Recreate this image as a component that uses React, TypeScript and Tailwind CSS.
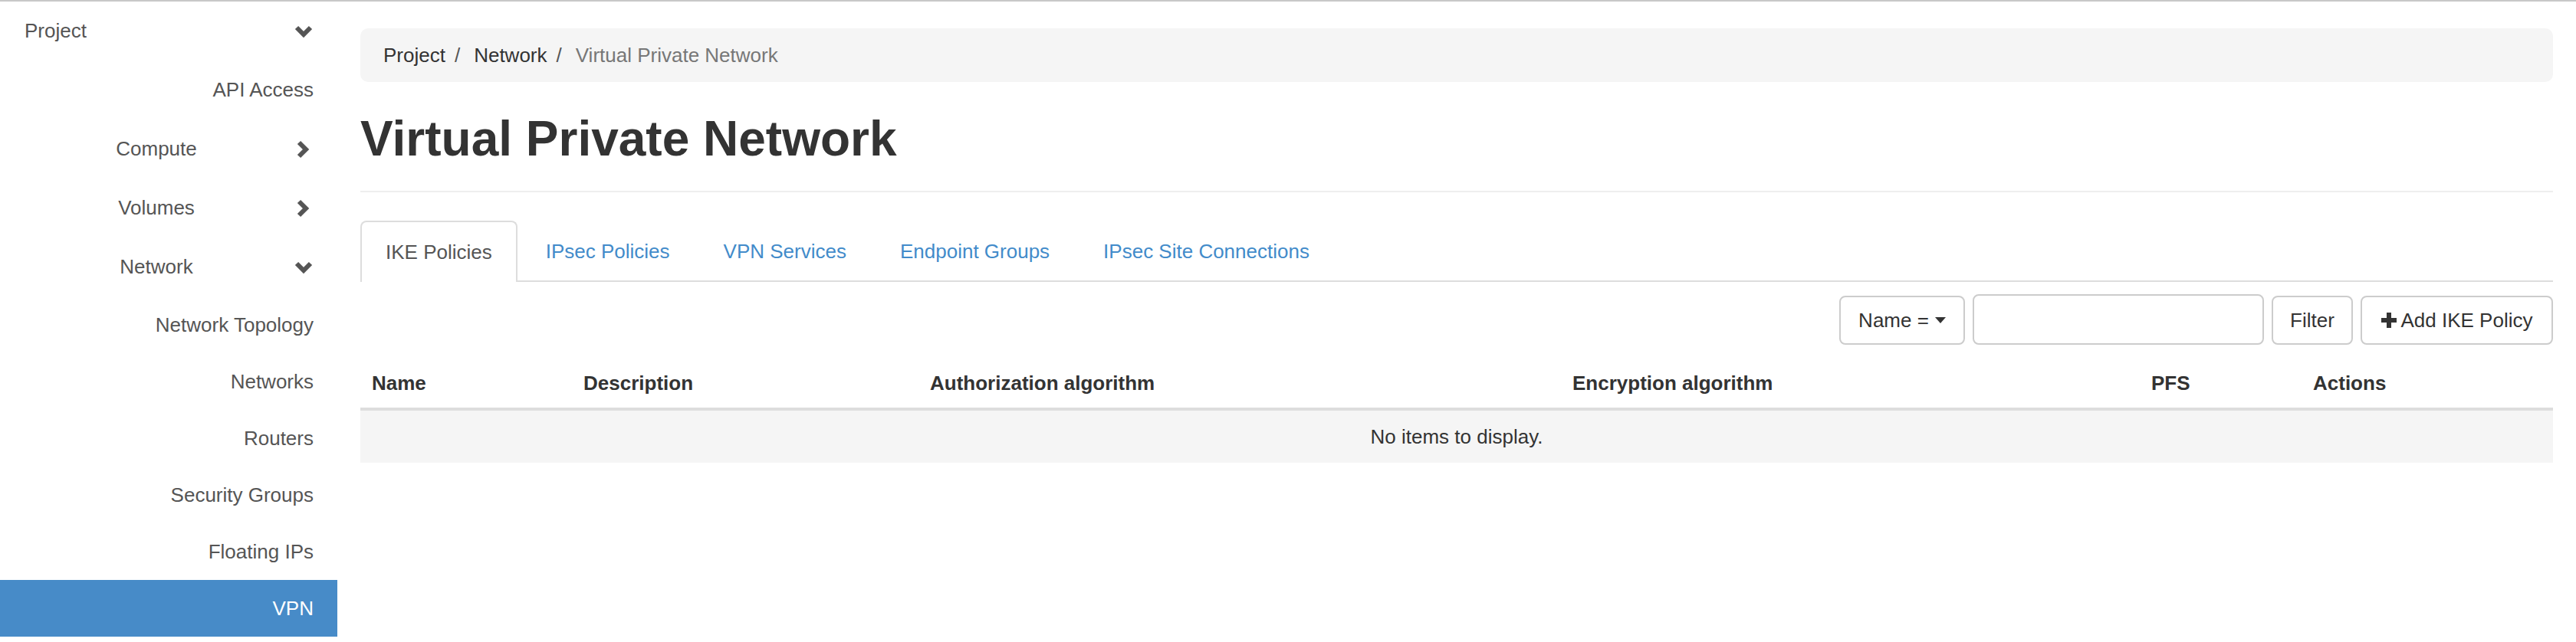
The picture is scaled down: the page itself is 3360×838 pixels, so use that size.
import React from "react";

const font = { fontFamily: '"Liberation Sans", Arial, sans-serif' };

const ChevronDown = () => (
  <svg width="24" height="18" viewBox="0 0 24 18" className="shrink-0">
    <polyline points="3,4 12,13 21,4" fill="none" stroke="#555" strokeWidth="6" strokeLinejoin="miter" />
  </svg>
);

const ChevronRight = () => (
  <svg width="24" height="24" viewBox="0 0 24 24" className="shrink-0">
    <polyline points="6,3 15,12 6,21" fill="none" stroke="#555" strokeWidth="6" strokeLinejoin="miter" />
  </svg>
);

const groups = [
  { label: "Compute", open: false },
  { label: "Volumes", open: false },
  { label: "Network", open: true },
];

const networkLinks = ["Network Topology", "Networks", "Routers", "Security Groups", "Floating IPs"];

const tabs = ["IKE Policies", "IPsec Policies", "VPN Services", "Endpoint Groups", "IPsec Site Connections"];

const columns = [
  { label: "Name", w: "w-[276px]" },
  { label: "Description", w: "w-[452px]" },
  { label: "Authorization algorithm", w: "w-[838px]" },
  { label: "Encryption algorithm", w: "w-[755px]" },
  { label: "PFS", w: "w-[211px]" },
  { label: "Actions", w: "flex-1" },
];

function Sidebar() {
  return (
    <aside className="w-[440px] shrink-0 flex flex-col text-[26px] text-[#555]">
      <div className="h-[77px] flex items-center pl-[32px] pr-[32px]">
        <span className="flex-1">Project</span>
        <ChevronDown />
      </div>
      <div className="h-[77px] flex items-center justify-end pr-[31px]">API Access</div>
      {groups.map((g) => (
        <div key={g.label} className="h-[77px] flex items-center pl-[24px] pr-[32px]">
          <span className="flex-1 text-center">{g.label}</span>
          {g.open ? <ChevronDown /> : <ChevronRight />}
        </div>
      ))}
      {networkLinks.map((l) => (
        <div key={l} className="h-[74px] flex items-center justify-end pr-[31px]">
          {l}
        </div>
      ))}
      <div className="h-[74px] flex items-center justify-end pr-[31px] bg-[#478bc8] text-white">VPN</div>
    </aside>
  );
}

function Toolbar() {
  return (
    <div className="mt-[18px] flex justify-end gap-[10px] text-[26px] text-[#333]">
      <button className="h-[64px] w-[164px] flex items-center justify-center gap-[8px] rounded-[8px] border-2 border-[#ccc] bg-white">
        Name =
        <svg width="14" height="10" viewBox="0 0 14 10">
          <polygon points="0,1 14,1 7,9" fill="#333" />
        </svg>
      </button>
      <input className="h-[66px] -mt-[2px] w-[380px] rounded-[8px] border-2 border-[#ccc] bg-white" />
      <button className="h-[64px] w-[106px] flex items-center justify-center rounded-[8px] border-2 border-[#ccc] bg-white">
        Filter
      </button>
      <button className="h-[64px] w-[251px] flex items-center justify-center gap-[6px] rounded-[8px] border-2 border-[#ccc] bg-white">
        <svg width="20" height="20" viewBox="0 0 20 20">
          <rect x="7" y="0" width="6" height="20" fill="#333" />
          <rect x="0" y="7" width="20" height="6" fill="#333" />
        </svg>
        Add IKE Policy
      </button>
    </div>
  );
}

export default function App() {
  return (
    <div className="w-[3360px] h-[838px] overflow-hidden bg-white border-t-2 border-[#c8c8c8] flex" style={font}>
      <Sidebar />
      <main className="flex-1 pl-[30px] pr-[30px] text-[#333]">
        <nav className="mt-[35px] h-[70px] rounded-[10px] bg-[#f5f5f5] pl-[30px] flex items-center text-[26px]">
          <span>Project</span>
          <span className="pl-[12px] pr-[18px] text-[#555]">/</span>
          <span>Network</span>
          <span className="pl-[12px] pr-[18px] text-[#555]">/</span>
          <span className="text-[#777]">Virtual Private Network</span>
        </nav>

        <h1 className="mt-[39px] text-[64px] leading-[70px] font-bold text-[#333]">Virtual Private Network</h1>
        <div className="mt-[33px] h-[2px] bg-[#eee]" />

        <ul className="mt-[37px] flex border-b-2 border-[#ddd] text-[26px]">
          {tabs.map((t, i) => (
            <li
              key={t}
              className={
                i === 0
                  ? "-mb-[2px] mr-[4px] h-[80px] px-[31px] flex items-center rounded-t-[8px] border-2 border-b-0 border-[#ddd] bg-white text-[#555]"
                  : "mr-[4px] h-[78px] px-[31px] flex items-center border-2 border-transparent border-b-0 text-[#428bca]"
              }
            >
              {t}
            </li>
          ))}
        </ul>

        <Toolbar />

        <div className="mt-[18px] text-[26px]">
          <div className="h-[68px] flex items-center font-bold border-b-4 border-[#ddd]">
            {columns.map((c) => (
              <div key={c.label} className={`${c.w} px-[15px]`}>
                {c.label}
              </div>
            ))}
          </div>
          <div className="h-[68px] flex items-center justify-center bg-[#f5f5f5]">No items to display.</div>
        </div>
      </main>
    </div>
  );
}
